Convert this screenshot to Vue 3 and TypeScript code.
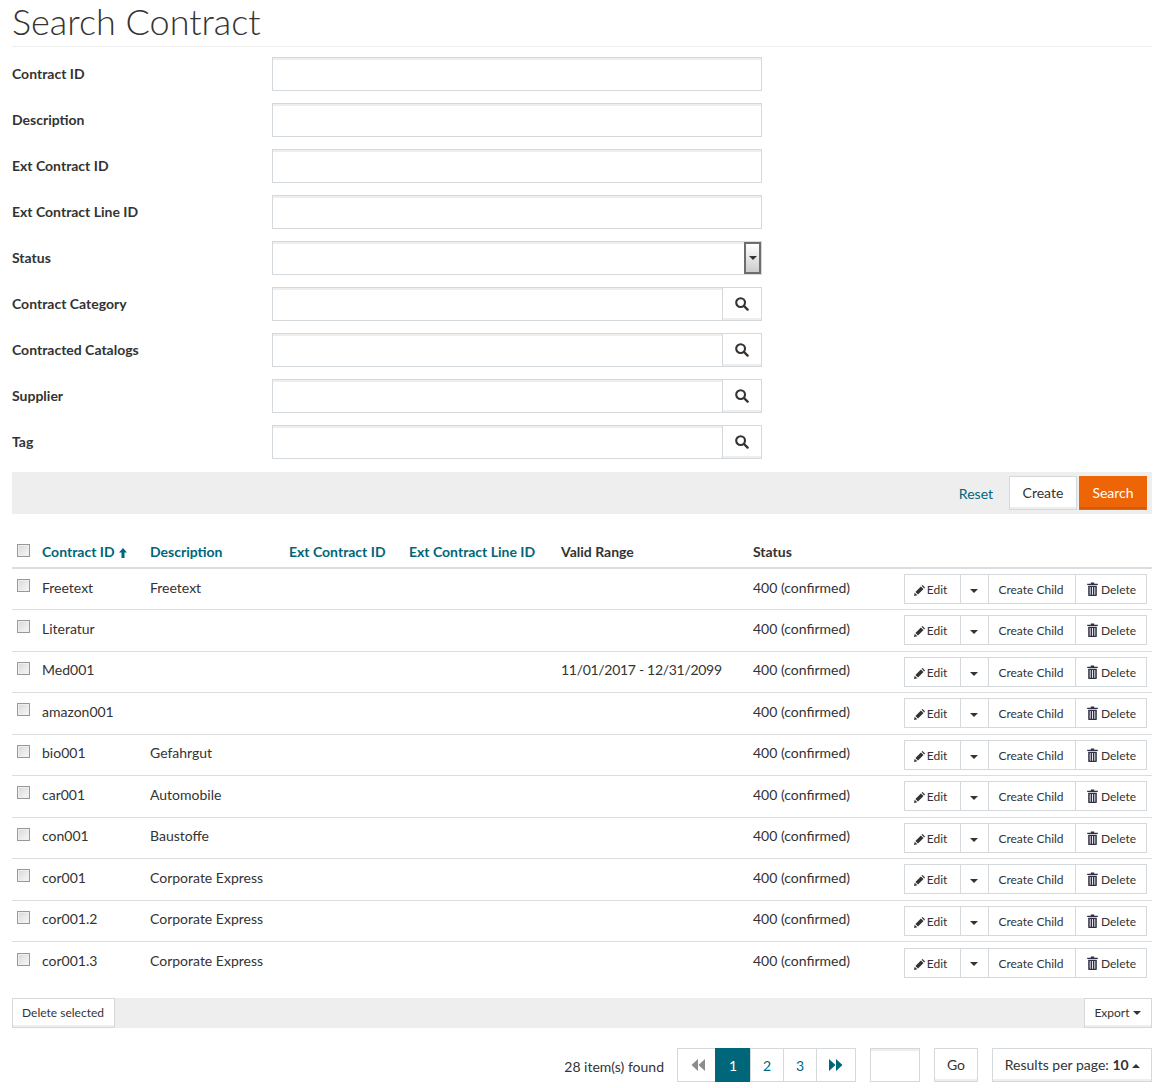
<script setup lang="ts">
interface Field { label: string; kind: 'text' | 'select' | 'lookup' }
interface Row { id: string; description: string; range: string }

const fields: Field[] = [
  { label: 'Contract ID', kind: 'text' },
  { label: 'Description', kind: 'text' },
  { label: 'Ext Contract ID', kind: 'text' },
  { label: 'Ext Contract Line ID', kind: 'text' },
  { label: 'Status', kind: 'select' },
  { label: 'Contract Category', kind: 'lookup' },
  { label: 'Contracted Catalogs', kind: 'lookup' },
  { label: 'Supplier', kind: 'lookup' },
  { label: 'Tag', kind: 'lookup' },
];

const rows: Row[] = [
  { id: 'Freetext', description: 'Freetext', range: '' },
  { id: 'Literatur', description: '', range: '' },
  { id: 'Med001', description: '', range: '11/01/2017 - 12/31/2099' },
  { id: 'amazon001', description: '', range: '' },
  { id: 'bio001', description: 'Gefahrgut', range: '' },
  { id: 'car001', description: 'Automobile', range: '' },
  { id: 'con001', description: 'Baustoffe', range: '' },
  { id: 'cor001', description: 'Corporate Express', range: '' },
  { id: 'cor001.2', description: 'Corporate Express', range: '' },
  { id: 'cor001.3', description: 'Corporate Express', range: '' },
];
</script>

<template>
  <div class="page">
    <h1 class="title">Search Contract</h1>

    <form class="search-form" @submit.prevent>
      <div v-for="f in fields" :key="f.label" class="form-row">
        <label class="form-label">{{ f.label }}</label>
        <div class="control">
          <input v-if="f.kind === 'text'" class="text-input" type="text" />
          <div v-else-if="f.kind === 'select'" class="select-wrap">
            <select class="text-input select-input"></select>
            <span class="select-arrow"><i class="caret"></i></span>
          </div>
          <div v-else class="lookup">
            <input class="text-input lookup-input" type="text" />
            <button class="lookup-btn" type="button">
              <svg width="14" height="14" viewBox="0 0 14 14">
                <circle cx="5.6" cy="5.6" r="4.4" fill="none" stroke="#333" stroke-width="2.1" />
                <path d="M9 9 L12.6 12.6" stroke="#333" stroke-width="2.4" stroke-linecap="round" />
              </svg>
            </button>
          </div>
        </div>
      </div>

      <div class="form-actions">
        <a class="link" href="#">Reset</a>
        <button class="btn" type="button">Create</button>
        <button class="btn btn-primary" type="submit">Search</button>
      </div>
    </form>

    <table class="results">
      <colgroup>
        <col style="width: 25px" />
        <col style="width: 108px" />
        <col style="width: 139px" />
        <col style="width: 120px" />
        <col style="width: 152px" />
        <col style="width: 192px" />
        <col style="width: 146px" />
        <col />
      </colgroup>
      <thead>
        <tr>
          <th class="check-cell"><input class="check" type="checkbox" /></th>
          <th>
            <a class="th-link" href="#">Contract ID
              <svg class="sort-icon" width="8" height="10" viewBox="0 0 8 10"><path d="M4 0 L8 4.6 H5.5 V10 H2.5 V4.6 H0 Z" fill="#00667a" /></svg>
            </a>
          </th>
          <th><a class="th-link" href="#">Description</a></th>
          <th><a class="th-link" href="#">Ext Contract ID</a></th>
          <th><a class="th-link" href="#">Ext Contract Line ID</a></th>
          <th>Valid Range</th>
          <th>Status</th>
          <th></th>
        </tr>
      </thead>
      <tbody>
        <tr v-for="r in rows" :key="r.id">
          <td class="check-cell"><input class="check" type="checkbox" /></td>
          <td>{{ r.id }}</td>
          <td class="nowrap">{{ r.description }}</td>
          <td></td>
          <td></td>
          <td class="nowrap range">{{ r.range }}</td>
          <td class="nowrap">400 (confirmed)</td>
          <td class="actions-cell">
            <div class="btn-group">
              <button class="mini edit" type="button">
                <svg width="11" height="11" viewBox="0 0 11 11"><path d="M0 11 L0.7 7.7 L3.3 10.3 Z M1.4 7 L6.9 1.5 L9.5 4.1 L4 9.6 Z M7.6 0.8 L8.2 0.2 Q8.5 0 8.8 0.2 L10.8 2.2 Q11 2.5 10.8 2.8 L10.2 3.4 Z" fill="#333" /></svg>
                Edit
              </button>
              <button class="mini toggle" type="button"><i class="caret"></i></button>
              <button class="mini child" type="button">Create Child</button>
              <button class="mini delete" type="button">
                <svg width="11" height="14" viewBox="0 0 11 14"><path d="M3.8 0.5 H7.2 V1.8 H10.8 V3 H0.2 V1.8 H3.8 Z M1.2 3.8 H9.8 V13.3 Q9.8 14 9.2 14 H1.8 Q1.2 14 1.2 13.3 Z" fill="#2f2f45" /><path d="M3.2 5 V12.8 M5.5 5 V12.8 M7.8 5 V12.8" stroke="#fff" stroke-width="0.9" /></svg>
                Delete
              </button>
            </div>
          </td>
        </tr>
      </tbody>
    </table>

    <div class="bulk-bar">
      <button class="btn small delete-selected" type="button">Delete selected</button>
      <button class="btn small export" type="button">Export <i class="caret tiny"></i></button>
    </div>

    <div class="pager-row">
      <span class="found">28 item(s) found</span>
      <div class="pages">
        <span class="page-item arrow first">
          <svg width="14" height="12" viewBox="0 0 14 12"><path d="M7 0 V12 L0.5 6 Z M14 0 V12 L7.5 6 Z" fill="#8c8c8c" /></svg>
        </span>
        <span class="page-item num active">1</span>
        <span class="page-item num">2</span>
        <span class="page-item num">3</span>
        <span class="page-item arrow">
          <svg width="14" height="12" viewBox="0 0 14 12"><path d="M0 0 V12 L6.5 6 Z M7 0 V12 L13.5 6 Z" fill="#00667a" /></svg>
        </span>
      </div>
      <input class="text-input page-jump" type="text" />
      <button class="btn go" type="button">Go</button>
      <button class="btn per-page" type="button">Results per page: <b>10</b> <i class="caret tiny up"></i></button>
    </div>
  </div>
</template>

<style>
html, body { background: #fff; margin: 0; overflow: hidden; }
</style>

<style scoped>
.arrow { width: 40px; }
.arrow.first { padding-left: 2px; width: 39px; }
.btn { background: #fff; border: 1px solid #d3d9dd; box-shadow: inset 0 -2px 0 #eee; box-sizing: border-box; color: #333; cursor: pointer; flex: none; font: 400 14px Lato, sans-serif; height: 34px; padding: 0 0 2px; }
.btn-group { display: flex; justify-content: flex-end; }
.btn-primary { background: #ee6508; border-color: #ee6508; box-shadow: inset 0 -2px 0 #d65a06; color: #fff; }
.bulk-bar { align-items: center; background: #eee; display: flex; height: 30px; justify-content: space-between; margin-top: 15px; }
.caret { border-left: 4px solid transparent; border-right: 4px solid transparent; border-top: 4px solid #333; display: inline-block; height: 0; vertical-align: middle; width: 0; }
.caret.up { border-bottom: 4px solid #333; border-top: 0; }
.check { appearance: none; background: linear-gradient(135deg, #d8d8d8, #f8f8f8); border: 1px solid #999; box-shadow: inset 0 0 0 1px #eee; box-sizing: border-box; display: block; height: 13px; margin: 0 0 3px; width: 13px; }
.control { width: 490px; }
.delete-selected { padding-right: 1px; width: 103px; }
.edit svg { margin-right: -1px; }
.export { padding-right: 1px; width: 68px; }
.form-actions { align-items: center; background: #eee; display: flex; gap: 2px; height: 42px; justify-content: flex-end; margin-top: 13px; padding-right: 5px; }
.form-actions .btn { width: 68px; }
.form-actions .link { margin-right: 14px; }
.form-label { color: #333; font-weight: 700; padding-bottom: 2px; width: 260px; }
.form-row { align-items: center; display: flex; height: 34px; }
.form-row + .form-row { margin-top: 12px; }
.found { flex: none; margin-right: 14px; padding-top: 2px; }
.go { margin-left: 14px; width: 44px; }
.link { color: #00667a; text-decoration: none; }
.lookup { display: flex; }
.lookup-btn { align-items: center; background: #fff; border: 1px solid #d3d9dd; border-left: 0; box-shadow: inset 0 -2px 0 #eee; box-sizing: border-box; display: flex; height: 34px; justify-content: center; padding: 0; width: 39px; }
.lookup-input { flex: 1; min-width: 0; }
.mini { background: #fff; border: 1px solid #d3d9dd; box-sizing: border-box; color: #333; font: 400 12px Lato, sans-serif; height: 30px; margin-left: -1px; padding: 1px 0 0; }
.mini svg { vertical-align: -2px; }
.mini.child { padding-right: 2px; width: 88px; }
.mini.delete { padding-left: 1px; width: 72px; }
.mini.edit { padding-right: 4px; width: 57px; }
.mini.toggle { padding-right: 2px; width: 29px; }
.nowrap { white-space: nowrap; }
.page { color: #333; font-family: Lato, sans-serif; font-size: 14px; padding: 0 11px 0 12px; }
.page-item { align-items: center; border: 1px solid #d3d9dd; box-sizing: border-box; color: #00667a; display: flex; height: 34px; justify-content: center; margin-left: -1px; }
.page-item.active { background: #00667a; border-color: #00667a; color: #fff; width: 36px; }
.page-item.num:not(.active) { width: 34px; }
.pager-row { align-items: center; display: flex; justify-content: flex-end; margin-top: 20px; }
.pages { display: flex; flex: none; }
.per-page { margin-left: 14px; padding-left: 1px; width: 160px; }
.range { letter-spacing: -0.3px; }
.results { border-collapse: collapse; margin-top: 24px; table-layout: fixed; width: 100%; }
.results td { border-bottom: 1px solid #ddd; box-sizing: border-box; height: 41.5px; padding: 0 5px 4px; }
.results td.actions-cell { padding: 0 5px 0 0; text-align: right; }
.results td.check-cell { padding: 0 0 4px 5px; }
.results th { border-bottom: 2px solid #ddd; box-sizing: border-box; color: #333; font-weight: 700; height: 30px; padding: 0 5px 2px; text-align: left; white-space: nowrap; }
.results th.check-cell { padding: 0 0 2px 5px; }
.results tbody tr:last-child td { border-bottom: 0; }
.search-form { margin-top: 10px; }
.select-arrow { align-items: center; background: linear-gradient(#fff, #ccc); border: 2px solid #6d6d6d; box-sizing: border-box; display: flex; height: 32px; justify-content: center; position: absolute; right: 1px; top: 1px; width: 17px; }
.select-input { appearance: none; background: #fff; }
.select-wrap { position: relative; }
.small { font-size: 12px; height: 30px; }
.sort-icon { margin-left: 1px; vertical-align: -1px; }
.text-input { border: 1px solid #d3d9dd; border-radius: 0; box-shadow: inset 0 2px 0 #eee; box-sizing: border-box; height: 34px; outline: none; padding: 0 8px; width: 100%; }
.text-input.page-jump { flex: none; margin-left: 14px; width: 50px; }
.th-link { color: #00667a; text-decoration: none; }
.title { border-bottom: 1px solid #eee; color: #333; font-size: 36px; font-weight: 300; height: 46px; line-height: 42px; margin: 0; }
</style>
